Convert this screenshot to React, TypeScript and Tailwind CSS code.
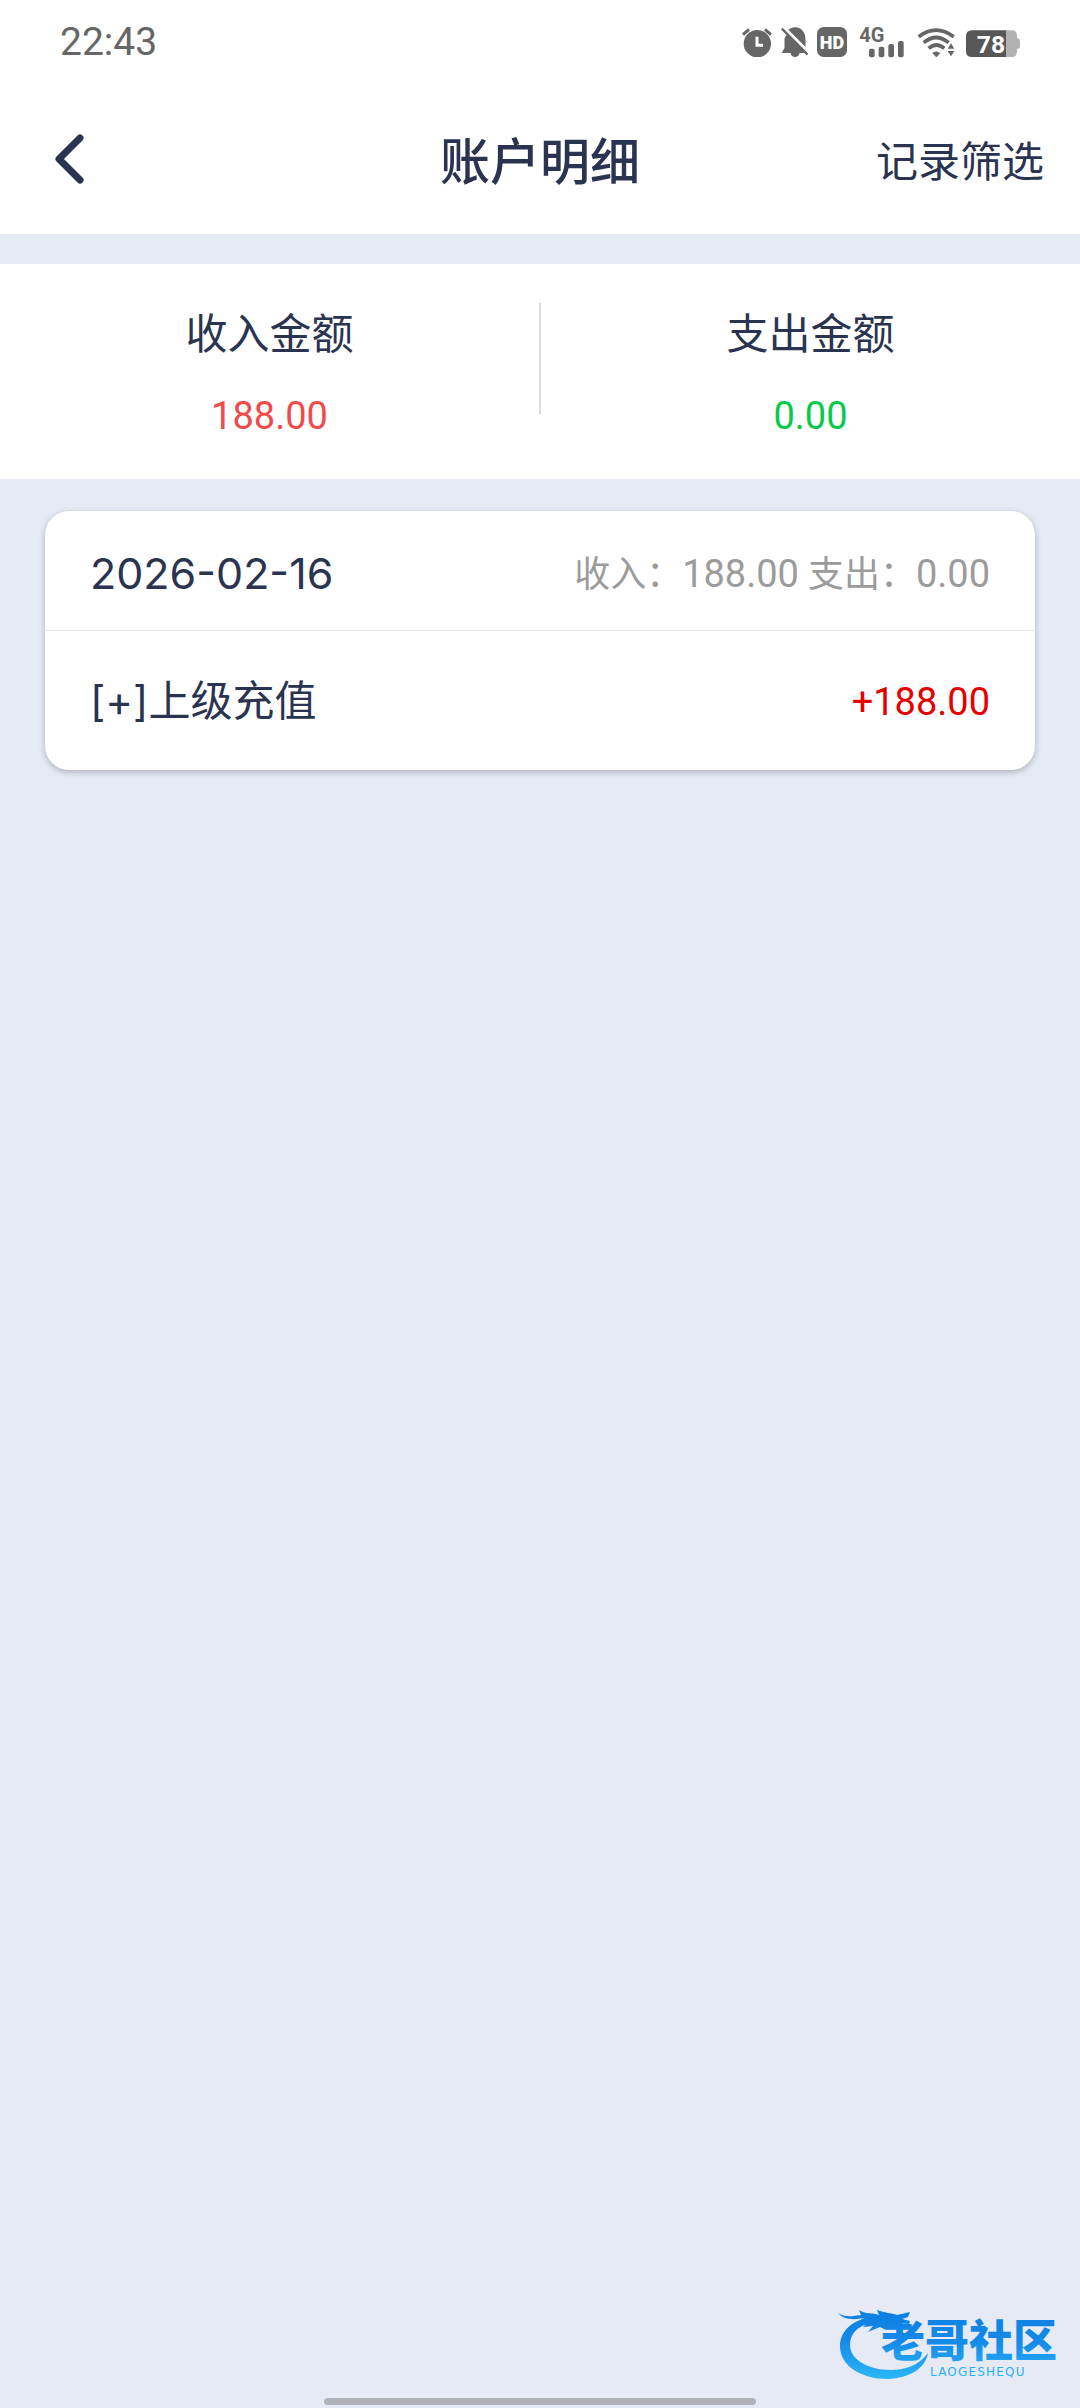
import { useState } from "react";

type Entry = {
  id: number;
  title: string;
  amount: number;
};

type DayGroup = {
  date: string;
  entries: Entry[];
};

const groups: DayGroup[] = [
  { date: "2026-02-16", entries: [{ id: 1, title: "上级充值", amount: 188 }] },
];

const sum = (list: Entry[], sign: 1 | -1) =>
  list.filter((e) => e.amount * sign > 0).reduce((acc, e) => acc + Math.abs(e.amount), 0);

function StatusBar() {
  return (
    <div className="flex h-[84px] items-center justify-between px-[60px] text-[#666666]">
      <span className="text-[39px] leading-none">22:43</span>
      <div className="flex items-center">
        {/* alarm */}
        <svg viewBox="42 50 90 90" className="h-[30px] w-[30px]">
          <circle cx="88" cy="100" r="41" fill="currentColor" />
          <path d="M45 73 L63 57 M129 73 L111 57" stroke="currentColor" strokeWidth="9" fill="none" />
          <path d="M87 79 V105 H105" stroke="#fff" strokeWidth="9" fill="none" />
        </svg>
        {/* muted bell */}
        <svg viewBox="156 50 86 90" className="ml-2 h-[30px] w-[29px]">
          <path
            d="M162 125 L169 113 V88 C169 66 182 52 201 51 C220 52 232 66 232 88 V113 L238 125 V128 H214 C213 136 207 140 201 140 C194 140 188 136 187 128 H162 Z"
            fill="currentColor"
          />
          <path d="M164 48 L246 130" stroke="#fff" strokeWidth="9" />
          <path d="M150 48 L168 48 L182 66 L168 84 Z" fill="#fff" />
          <path d="M161 55 L238 133" stroke="currentColor" strokeWidth="7" />
        </svg>
        {/* HD voice */}
        <svg viewBox="267 50 90 90" className="ml-2 h-[30px] w-[30px]">
          <rect x="267" y="50" width="90" height="90" rx="20" fill="currentColor" />
          <text x="312" y="115" textAnchor="middle" fontSize="54" fontWeight="900" fill="#fff">
            HD
          </text>
        </svg>
        {/* cellular */}
        <svg viewBox="390 35 138 120" className="ml-3 h-[40px] w-[46px]">
          <text x="391" y="96" fontSize="60" fontWeight="700" fill="currentColor">
            4G
          </text>
          <rect x="420" y="115" width="17" height="26" rx="6" fill="currentColor" />
          <rect x="449" y="109" width="17" height="32" rx="6" fill="currentColor" />
          <rect x="478" y="101" width="17" height="40" rx="6" fill="currentColor" />
          <rect x="507" y="92" width="17" height="49" rx="6" fill="currentColor" />
        </svg>
        {/* wifi */}
        <svg viewBox="561 50 117 90" className="ml-3 h-[30px] w-[39px]">
          <g fill="none" stroke="currentColor" strokeWidth="11">
            <path d="M566 79 Q618 40 671 79" />
            <path d="M581 97 Q618 66 656 97" />
            <path d="M596 114 Q619 94 643 114" />
          </g>
          <path d="M607 128 Q619 119 631 128 L619 141 Z" fill="currentColor" />
          <path d="M647 116 L663 92 L679 116 V141 H647 Z" fill="#fff" />
          <path d="M653 115 L663 99 L673 115 Z M653 122 L663 138 L673 122 Z" fill="currentColor" />
        </svg>
        {/* battery */}
        <svg viewBox="708 35 162 120" className="ml-[10px] h-[40px] w-[54px]">
          <path d="M828 60 H846 Q860 60 861 76 V84 Q870 84 870 92 V108 Q870 116 861 116 V124 Q860 140 846 140 H828 Z" fill="#b2b2b2" />
          <path d="M726 60 H828 V140 H726 Q708 140 708 122 V78 Q708 60 726 60 Z" fill="#575757" />
          <text x="783" y="127" textAnchor="middle" fontSize="74" fontWeight="700" fill="#fff">
            78
          </text>
        </svg>
      </div>
    </div>
  );
}

function SummaryItem({ label, value, color }: { label: string; value: number; color: string }) {
  return (
    <div className="flex flex-1 flex-col items-center gap-6 pt-[2px]">
      <span className="text-[42px] leading-[60px]">{label}</span>
      <span className={`text-[38px] leading-[54px] ${color}`}>{value.toFixed(2)}</span>
    </div>
  );
}

function DayCard({ group }: { group: DayGroup }) {
  return (
    <section className="rounded-3xl bg-white shadow-[0_2px_6px_rgba(0,0,0,0.25)]">
      <header className="flex items-center justify-between border-b border-[#e4e4e4] px-[45px] pt-8 pb-7">
        <h2 className="font-['Inter','Noto_Sans_CJK_SC',sans-serif] text-[43px] leading-[54px]">{group.date}</h2>
        <p className="pt-1 text-[36px] leading-[54px] text-[#9b9b9b]">
          收入：<span className="text-[38px]">{sum(group.entries, 1).toFixed(2)}</span> 支出：
          <span className="text-[38px]">{sum(group.entries, -1).toFixed(2)}</span>
        </p>
      </header>
      <ul>
        {group.entries.map((entry) => (
          <li key={entry.id} className="flex items-center justify-between px-[45px] pt-10 pb-[38px]">
            <span className="text-[42px] leading-[60px]">
              <span className="font-['Inter',sans-serif]">[+]</span>
              {entry.title}
            </span>
            <span className="text-[38px] leading-[60px] text-[#e60000]">
              {entry.amount > 0 ? "+" : ""}
              {entry.amount.toFixed(2)}
            </span>
          </li>
        ))}
      </ul>
    </section>
  );
}

function Watermark() {
  return (
    <svg viewBox="15 10 230 85" className="h-[85px] w-[230px]" role="img" aria-label="老哥社区">
      <defs>
        <linearGradient id="wm" gradientUnits="userSpaceOnUse" x1="0" y1="20" x2="0" y2="90">
          <stop offset="0" stopColor="#0c7fe2" />
          <stop offset="0.45" stopColor="#168ae8" />
          <stop offset="1" stopColor="#2bb8f8" />
        </linearGradient>
      </defs>
      <g fill="url(#wm)">
        <path d="M48 28 C30 31 20 43 20 56 C20 76 41 89 68 89 C89 88 105 79 108 63 C99 75 86 80 71 80 C47 80 30 69 30 55 C30 44 37 36 51 33 Z" />
        <path d="M18 23 C25 28 33 26 41 25 L39 20 C46 25 53 22 59 25 L57 20 C65 23 71 23 77 25 L90 22 L88 27 L82 29 L90 31 L89 34 L78 33 L85 38 L73 36 L66 40 L60 37 L48 42 L53 36 L43 37 L48 32 L39 31 L44 28 C34 30 24 30 18 23 Z" />
        <text x="61" y="67" fontSize="44" fontWeight="900" fontFamily="'Noto Sans CJK SC', sans-serif">
          老哥社区
        </text>
        <text x="110" y="86" fontSize="12" className="tracking-widest" fontFamily="'DejaVu Sans', sans-serif">
          LAOGESHEQU
        </text>
      </g>
    </svg>
  );
}

export default function App() {
  const [filterOpen, setFilterOpen] = useState(false);
  const all = groups.flatMap((g) => g.entries);

  return (
    <div className="flex min-h-screen flex-col bg-[#e6eaf5] font-['Roboto','Noto_Sans_CJK_SC',sans-serif] text-[#2a3350]">
      <div className="bg-white">
        <StatusBar />
        <nav className="grid h-[150px] grid-cols-[1fr_auto_1fr] items-center px-9">
          <button type="button" aria-label="返回" className="justify-self-start px-4">
            <svg viewBox="0 0 32 52" className="h-[52px] w-8" fill="none" stroke="currentColor" strokeWidth="7" strokeLinecap="round" strokeLinejoin="round">
              <path d="M28 5 L7 26 L28 47" />
            </svg>
          </button>
          <h1 className="pt-2 text-[50px] leading-[72px] font-medium">账户明细</h1>
          <button
            type="button"
            aria-pressed={filterOpen}
            onClick={() => setFilterOpen(!filterOpen)}
            className="justify-self-end pt-2 text-[42px] leading-[60px]"
          >
            记录筛选
          </button>
        </nav>
      </div>

      <div className="mt-[30px] flex bg-white pt-[39px] pb-9">
        <SummaryItem label="收入金额" value={sum(all, 1)} color="text-[#f04b4b]" />
        <div className="h-[111px] w-[2px] bg-[#d9dddd]" />
        <SummaryItem label="支出金额" value={sum(all, -1)} color="text-[#07c94c]" />
      </div>

      <main className="flex flex-col gap-8 px-[45px] pt-8">
        {groups.map((group) => (
          <DayCard key={group.date} group={group} />
        ))}
      </main>

      <footer className="mt-auto flex flex-col pb-[3px]">
        <div className="self-end pr-[15px] pb-[13px]">
          <Watermark />
        </div>
        <div className="h-[7px] w-2/5 self-center rounded-full bg-[#b0b2b8]" />
      </footer>
    </div>
  );
}
